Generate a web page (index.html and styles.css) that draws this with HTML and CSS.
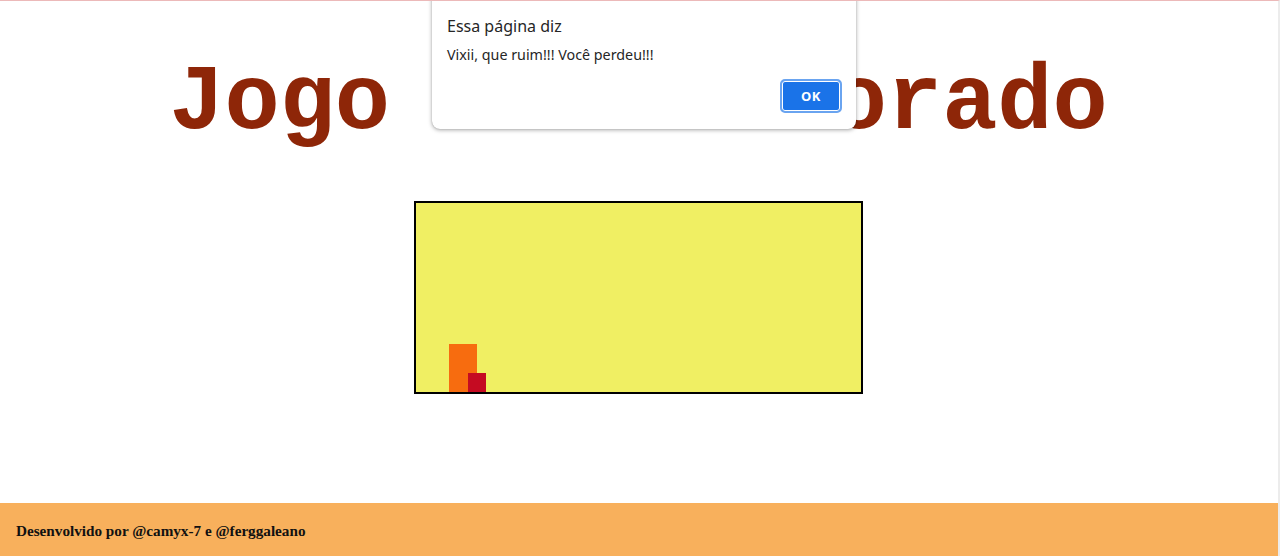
FILE: index.html
```html
<!DOCTYPE html>
<html lang="pt-BR">
<head>
<meta charset="utf-8">
<title>Jogo do El Dorado</title>
<link rel="stylesheet" href="styles.css">
</head>
<body>
<div class="page">
  <main class="content">
    <h1 class="title">Jogo do El Dorado</h1>
    <div class="board">
      <div class="piece obstacle"></div>
      <div class="piece player"></div>
    </div>
  </main>
  <footer class="footer">
    <p class="credits">Desenvolvido por @camyx-7 e @ferggaleano</p>
  </footer>
</div>
<div class="dialog" role="alertdialog">
  <div class="dialog-title">Essa página diz</div>
  <div class="dialog-message">Vixii, que ruim!!! Você perdeu!!!</div>
  <div class="dialog-actions">
    <button class="dialog-ok" type="button">OK</button>
  </div>
</div>
</body>
</html>
```
FILE: styles.css
```css
html, body {
  margin: 0;
  padding: 0;
  height: 556px;
  overflow: hidden;
  background: #ffffff;
}

body {
  border-top: 1px solid #ecb9b9;
  border-right: 2px solid #ececec;
  box-sizing: border-box;
  position: relative;
}

.page {
  display: flex;
  flex-direction: column;
  height: 555px;
}

.content {
  flex: 1;
  display: flex;
  flex-direction: column;
  align-items: center;
  padding-right: 1px;
}

.title {
  margin: 51px 0 0 0;
  font-family: "Liberation Mono", "Courier New", monospace;
  font-size: 92px;
  font-weight: bold;
  line-height: 104px;
  color: #8e2608;
  text-align: center;
  white-space: nowrap;
}

.board {
  position: relative;
  margin-top: 45px;
  width: 445px;
  height: 189px;
  border: 2px solid #000000;
  background: #f0ef63;
}

.piece {
  position: absolute;
  bottom: 0;
}

.obstacle {
  left: 33px;
  width: 28px;
  height: 48px;
  background: #f76c0f;
}

.player {
  left: 52px;
  width: 18px;
  height: 19px;
  background: #c50b22;
}

.footer {
  height: 53px;
  background: #f8b05c;
  display: flex;
  align-items: center;
  padding: 0 16px;
}

.credits {
  margin: 0;
  padding-top: 2px;
  font-family: "Liberation Serif", "Times New Roman", serif;
  font-weight: bold;
  font-size: 15.2px;
  color: #111111;
}

.dialog {
  position: absolute;
  left: 432px;
  top: -10px;
  width: 424px;
  height: 138px;
  box-sizing: border-box;
  padding: 24px 14px 0 15px;
  background: #ffffff;
  border-radius: 0 0 8px 8px;
  box-shadow: 0 1px 4px rgba(0, 0, 0, 0.35), 0 0 1px rgba(0, 0, 0, 0.3);
  font-family: "Noto Sans", "Open Sans", sans-serif;
  color: #262626;
}

.dialog-title {
  font-size: 16px;
  line-height: 22px;
}

.dialog-message {
  margin-top: 8px;
  font-size: 14.3px;
  line-height: 20px;
}

.dialog-actions {
  display: flex;
  justify-content: flex-end;
  margin-top: 14px;
}

.dialog-ok {
  width: 62px;
  height: 34px;
  box-sizing: border-box;
  border: 2px solid #6aa4f0;
  border-radius: 5px;
  background: #1a73e8;
  box-shadow: inset 0 0 0 1px #ffffff;
  color: #ffffff;
  font-family: "Noto Sans", "Open Sans", sans-serif;
  font-weight: bold;
  font-size: 13px;
  letter-spacing: 0.5px;
  padding: 0;
}
```
